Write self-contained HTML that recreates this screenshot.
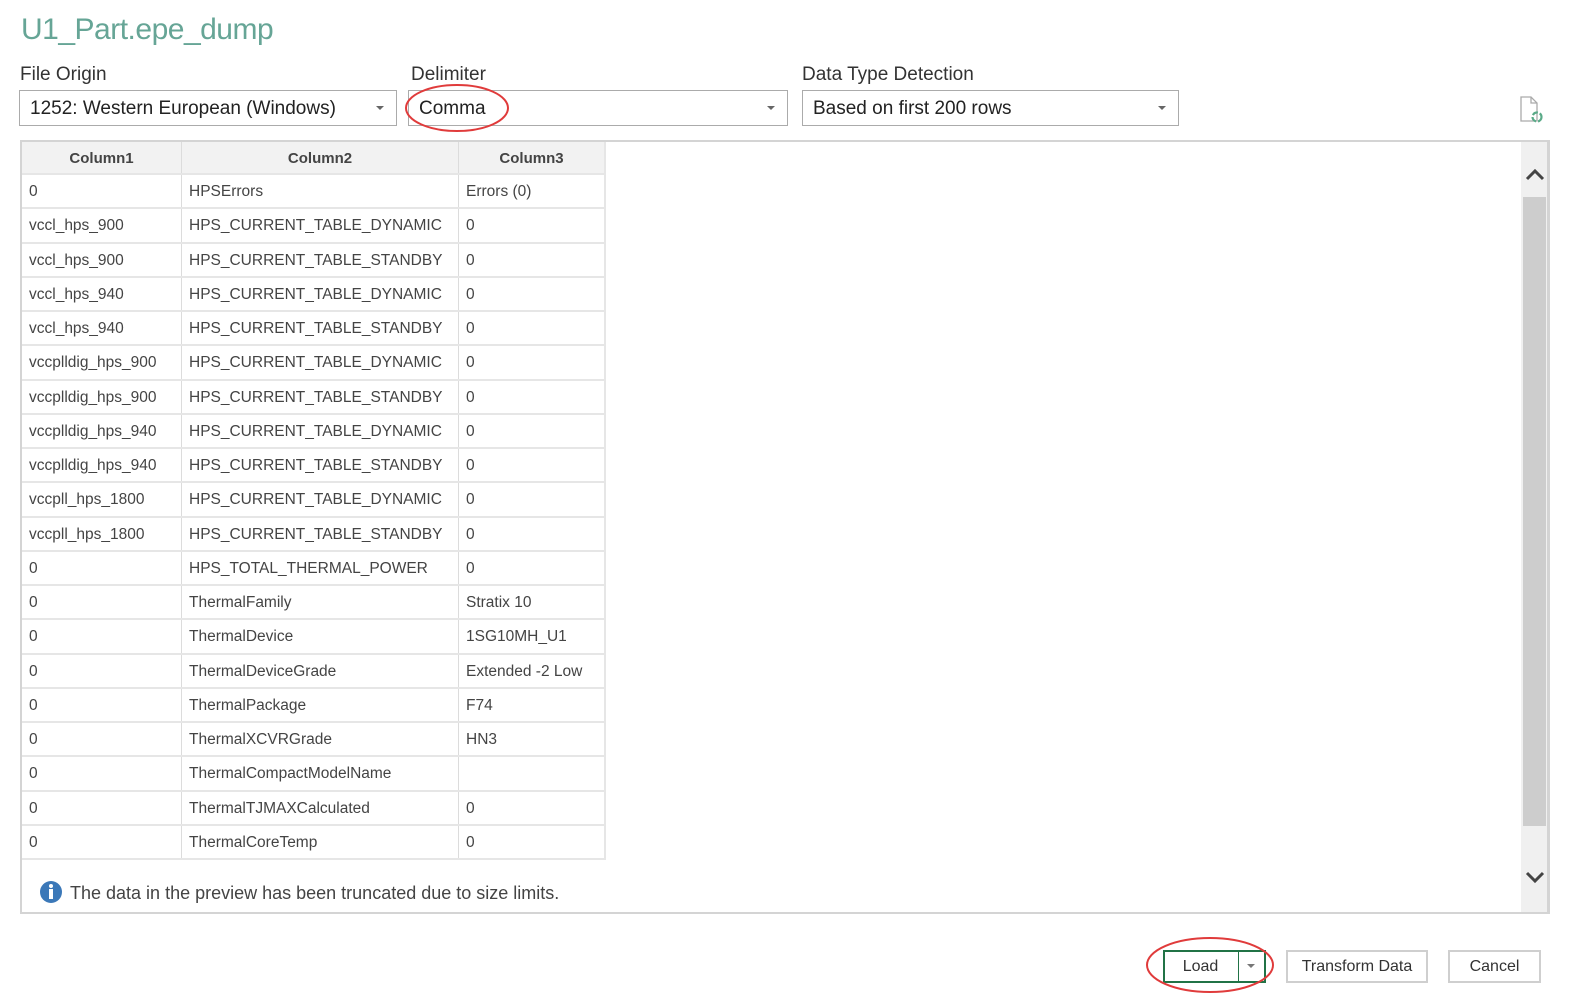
<!DOCTYPE html>
<html><head><meta charset="utf-8"><style>
*{box-sizing:border-box;margin:0;padding:0}
body{width:1584px;height:1005px;background:#fff;font-family:"Liberation Sans",sans-serif;color:#333;position:relative;overflow:hidden}
.abs{position:absolute}
.title{left:21px;top:13px;font-size:30px;color:#66a596;letter-spacing:-0.5px}
.lbl{top:64px;font-size:19px;color:#333}
.dd{top:90px;height:36px;border:1px solid #ababab;font-size:19px;padding:7px 0 0 10px;color:#222}
.dd .ar{position:absolute;right:12px;top:15px;width:0;height:0;border-left:4px solid transparent;border-right:4px solid transparent;border-top:4px solid #666}
.panel{left:20px;top:140px;width:1530px;height:774px;border:2px solid #d4d4d4;border-right-width:3px}
.tbl{left:22px;top:142px}
.row{position:absolute;left:0;height:34.25px;border-bottom:2px solid #e6e6e6;width:584px}
.c{position:absolute;top:0;height:100%;font-size:15.5px;padding:8px 0 0 7px;white-space:nowrap;overflow:hidden;color:#444;border-right:1px solid #dcdcdc}
.h .c{background:#f2f2f2;font-weight:bold;text-align:center;padding-left:0;color:#444;font-size:15px}
.c1{left:0;width:160px}.c2{left:160px;width:277px}.c3{left:437px;width:147px;border-right:2px solid #e6e6e6}
.sb{left:1521px;top:142px;width:26px;height:770px;background:#f0f0f0}
.thumb{left:1523px;top:197px;width:23px;height:629px;background:#cdcdcd}
.btn{top:950px;height:33px;border:2px solid #cfcfcf;font-size:16px;text-align:center;padding-top:6px;color:#333}
</style></head><body>
<div class="abs title">U1_Part.epe_dump</div>
<div class="abs lbl" style="left:20px">File Origin</div>
<div class="abs lbl" style="left:411px">Delimiter</div>
<div class="abs lbl" style="left:802px">Data Type Detection</div>
<div class="abs dd" style="left:19px;width:378px">1252: Western European (Windows)<span class="ar"></span></div>
<div class="abs dd" style="left:408px;width:380px">Comma<span class="ar"></span></div>
<div class="abs dd" style="left:802px;width:377px">Based on first 200 rows<span class="ar"></span></div>
<svg class="abs" style="left:1518px;top:96px" width="28" height="28" viewBox="0 0 28 28"><path d="M3 1h10l6 6v18H3z" fill="none" stroke="#aaa" stroke-width="1.3"/><path d="M13 1v6h6" fill="none" stroke="#aaa" stroke-width="1.3"/><circle cx="19" cy="21" r="4.5" fill="none" stroke="#5aaa88" stroke-width="2.2" stroke-dasharray="6 2"/></svg>
<div class="abs panel"></div>
<div class="abs sb"></div><div class="abs thumb"></div>
<svg class="abs" style="left:1524px;top:166px" width="22" height="18"><path d="M3 13l8-8 8 8" fill="none" stroke="#444" stroke-width="3"/></svg>
<svg class="abs" style="left:1524px;top:868px" width="22" height="18"><path d="M3 5l8 8 8-8" fill="none" stroke="#444" stroke-width="3"/></svg>
<div class="abs tbl">
<div class="row h" style="top:0;height:33px"><div class="c c1">Column1</div><div class="c c2">Column2</div><div class="c c3">Column3</div></div>
<div class="row" style="top:33px"><div class="c c1">0</div><div class="c c2">HPSErrors</div><div class="c c3">Errors (0)</div></div>
<div class="row" style="top:67.25px"><div class="c c1">vccl_hps_900</div><div class="c c2">HPS_CURRENT_TABLE_DYNAMIC</div><div class="c c3">0</div></div>
<div class="row" style="top:101.5px"><div class="c c1">vccl_hps_900</div><div class="c c2">HPS_CURRENT_TABLE_STANDBY</div><div class="c c3">0</div></div>
<div class="row" style="top:135.75px"><div class="c c1">vccl_hps_940</div><div class="c c2">HPS_CURRENT_TABLE_DYNAMIC</div><div class="c c3">0</div></div>
<div class="row" style="top:170px"><div class="c c1">vccl_hps_940</div><div class="c c2">HPS_CURRENT_TABLE_STANDBY</div><div class="c c3">0</div></div>
<div class="row" style="top:204.25px"><div class="c c1">vccplldig_hps_900</div><div class="c c2">HPS_CURRENT_TABLE_DYNAMIC</div><div class="c c3">0</div></div>
<div class="row" style="top:238.5px"><div class="c c1">vccplldig_hps_900</div><div class="c c2">HPS_CURRENT_TABLE_STANDBY</div><div class="c c3">0</div></div>
<div class="row" style="top:272.75px"><div class="c c1">vccplldig_hps_940</div><div class="c c2">HPS_CURRENT_TABLE_DYNAMIC</div><div class="c c3">0</div></div>
<div class="row" style="top:307px"><div class="c c1">vccplldig_hps_940</div><div class="c c2">HPS_CURRENT_TABLE_STANDBY</div><div class="c c3">0</div></div>
<div class="row" style="top:341.25px"><div class="c c1">vccpll_hps_1800</div><div class="c c2">HPS_CURRENT_TABLE_DYNAMIC</div><div class="c c3">0</div></div>
<div class="row" style="top:375.5px"><div class="c c1">vccpll_hps_1800</div><div class="c c2">HPS_CURRENT_TABLE_STANDBY</div><div class="c c3">0</div></div>
<div class="row" style="top:409.75px"><div class="c c1">0</div><div class="c c2">HPS_TOTAL_THERMAL_POWER</div><div class="c c3">0</div></div>
<div class="row" style="top:444px"><div class="c c1">0</div><div class="c c2">ThermalFamily</div><div class="c c3">Stratix 10</div></div>
<div class="row" style="top:478.25px"><div class="c c1">0</div><div class="c c2">ThermalDevice</div><div class="c c3">1SG10MH_U1</div></div>
<div class="row" style="top:512.5px"><div class="c c1">0</div><div class="c c2">ThermalDeviceGrade</div><div class="c c3">Extended -2 Low</div></div>
<div class="row" style="top:546.75px"><div class="c c1">0</div><div class="c c2">ThermalPackage</div><div class="c c3">F74</div></div>
<div class="row" style="top:581px"><div class="c c1">0</div><div class="c c2">ThermalXCVRGrade</div><div class="c c3">HN3</div></div>
<div class="row" style="top:615.25px"><div class="c c1">0</div><div class="c c2">ThermalCompactModelName</div><div class="c c3"></div></div>
<div class="row" style="top:649.5px"><div class="c c1">0</div><div class="c c2">ThermalTJMAXCalculated</div><div class="c c3">0</div></div>
<div class="row" style="top:683.75px"><div class="c c1">0</div><div class="c c2">ThermalCoreTemp</div><div class="c c3">0</div></div>
</div>
<svg class="abs" style="left:39px;top:880px" width="24" height="24"><circle cx="12" cy="12" r="11" fill="#3b78b8"/><rect x="10" y="9" width="4" height="10" fill="#fff"/><circle cx="12" cy="6" r="2" fill="#fff"/></svg>
<div class="abs" style="left:70px;top:883px;font-size:18px;color:#444">The data in the preview has been truncated due to size limits.</div>
<div class="abs btn" style="left:1163px;width:103px;border-color:#217346;padding-right:28px">Load</div>
<div class="abs" style="left:1238px;top:951px;width:1px;height:31px;background:#217346"></div>
<div class="abs" style="left:1247px;top:964px;border-left:4px solid transparent;border-right:4px solid transparent;border-top:4px solid #777"></div>
<div class="abs btn" style="left:1286px;width:142px">Transform Data</div>
<div class="abs btn" style="left:1448px;width:93px">Cancel</div>
<svg class="abs" style="left:0;top:0" width="1584" height="1005"><ellipse cx="457" cy="108" rx="51" ry="23" fill="none" stroke="#e03b3b" stroke-width="2"/><ellipse cx="1210" cy="965" rx="63" ry="27" fill="none" stroke="#e03b3b" stroke-width="2"/></svg>
</body></html>
